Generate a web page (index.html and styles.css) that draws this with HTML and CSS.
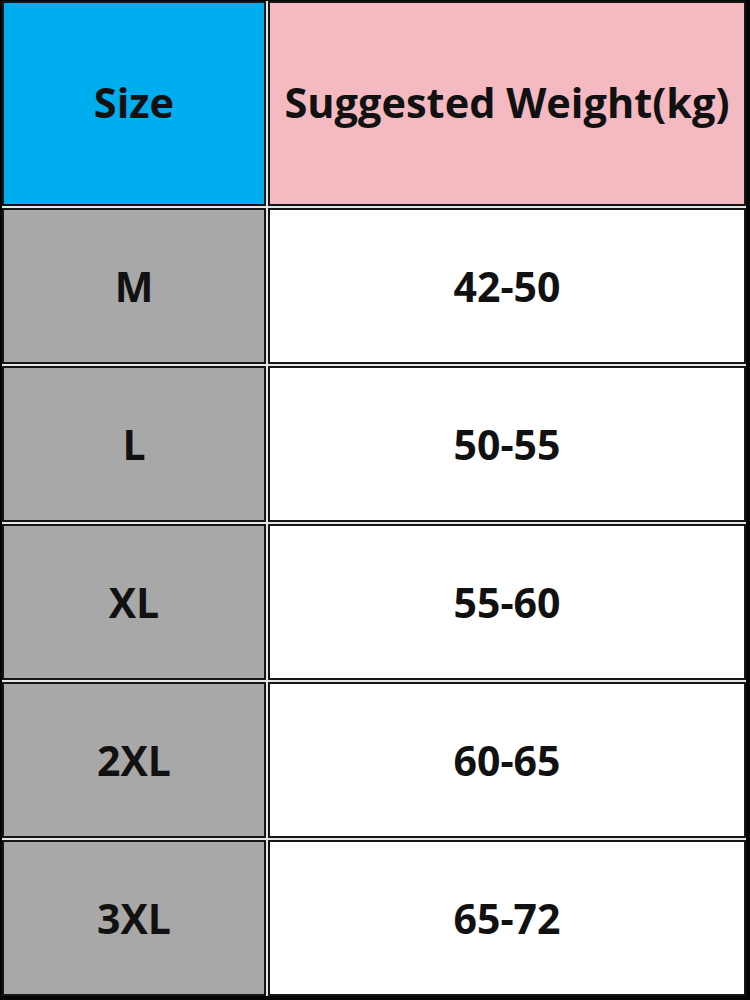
FILE: index.html
```html
<!DOCTYPE html>
<html>
<head>
<meta charset="utf-8">
<link rel="stylesheet" href="styles.css">
</head>
<body>
<div class="chart">
  <div class="cell head size">Size</div>
  <div class="cell head weight">Suggested Weight(kg)</div>
  <div class="cell label">M</div>
  <div class="cell value">42-50</div>
  <div class="cell label">L</div>
  <div class="cell value">50-55</div>
  <div class="cell label">XL</div>
  <div class="cell value">55-60</div>
  <div class="cell label">2XL</div>
  <div class="cell value">60-65</div>
  <div class="cell label">3XL</div>
  <div class="cell value">65-72</div>
</div>
</body>
</html>
```
FILE: styles.css
```css
html, body {
  margin: 0;
  padding: 0;
  background: #ffffff;
}
.chart {
  box-sizing: border-box;
  width: 750px;
  height: 1000px;
  border-style: solid;
  border-color: #050505;
  border-width: 1px 4px 4px 2px;
  background: #e6e6e6;
  display: grid;
  grid-template-columns: 264px 1fr;
  grid-template-rows: 205px repeat(5, 156px);
  gap: 2px;
  font-family: "Open Sans", "Liberation Sans", sans-serif;
  font-weight: 700;
  font-size: 41px;
  color: #111111;
}
.cell {
  box-sizing: border-box;
  border: 2px solid #161616;
  display: flex;
  align-items: center;
  justify-content: center;
}
.head {
  font-size: 41.5px;
  padding-bottom: 4px;
}
.size { background: #00aeef; }
.weight { background: #f4b9c1; }
.label { background: #a8a8a8; }
.value { background: #ffffff; }
```
